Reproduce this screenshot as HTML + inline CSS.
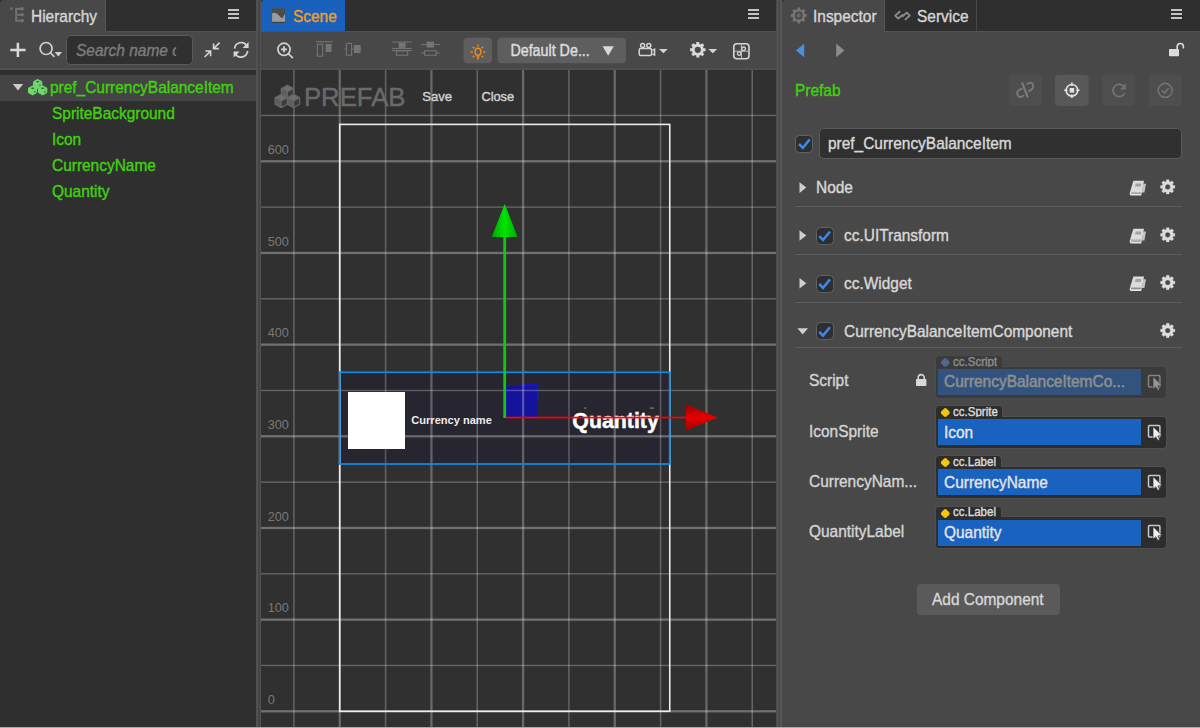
<!DOCTYPE html>
<html lang="en">
<head>
<meta charset="utf-8">
<title>Cocos Creator - Prefab</title>
<style>
*{box-sizing:border-box;margin:0;padding:0}
html,body{width:1200px;height:728px;overflow:hidden;background:#2f2f2f}
body{font-family:"Liberation Sans",sans-serif;font-size:15.45px;color:#cfcfcf;position:relative}
.abs{position:absolute}
.t{position:absolute;white-space:nowrap;font-size:16.2px;line-height:14.93px;transform:scaleX(.954);transform-origin:0 0;-webkit-text-stroke:0.38px currentColor}
svg{position:absolute;overflow:visible}
/* panels */
#hier{left:0;top:0;width:256px;height:727px;background:#2f2f2f}
#split1{left:256px;top:0;width:5.7px;height:727px;background:linear-gradient(90deg,#515151 0,#515151 1.9px,#464646 1.9px,#464646 3.8px,#515151 3.8px)}
#scene{left:261px;top:0;width:516px;height:727px;background:#303030;overflow:hidden}
#split2{left:776.4px;top:0;width:5.6px;height:727px;background:linear-gradient(90deg,#4a4a4a 0,#4a4a4a .6px,#575757 .6px,#575757 1.8px,#4a4a4a 1.8px,#4a4a4a 4.4px,#575757 4.4px,#575757 5.6px)}
#insp{left:782px;top:0;width:418px;height:727px;background:#484848}
#bottomline{left:0;top:726.6px;width:1200px;height:1.4px;background:#acacac}
.tabbar{left:0;top:0;height:31px;background:#2f2f2f}
.toolbar{left:0;top:31px;height:39px;background:#484848;border-top:1.4px solid #525252;border-bottom:2px solid #4f4f4f}
.tab{top:0;height:31px;background:#484848}
.menu i{position:absolute;left:0;width:11px;height:2px;background:#c4c4c4}
.green{color:#41d10f}
.row{left:0;width:256px;height:25.7px}
/* inspector */
.sep{left:13px;width:387px;height:1px;background:#5c5c5c}
.cb{width:18px;height:18px;border-radius:4.5px;background:#2e2e2e;border:1.5px solid #626262}
.pbtn{top:75px;width:33.5px;height:31px;border-radius:4px;background:#4f4f4f}
.fbox{left:154px;width:229.6px;height:31px;border-radius:3.5px;background:#2d2d2d;box-shadow:0 0 0 1px #4f4f4f}
.ftag{left:154px;height:14px;border-radius:3.5px 3.5px 0 0;background:#2d2d2d;box-shadow:0 0 0 1px #4f4f4f}
.fblue{left:156.3px;width:202.3px;height:26px;background:#1a62bf}
.ftagt{font-size:12.1px;line-height:11.4px;color:#dcdcdc;height:10.4px;overflow:hidden}
</style>
</head>
<body>

<!-- ================= HIERARCHY ================= -->
<div id="hier" class="abs">
  <div class="abs tabbar" style="width:256px;border-radius:0 4px 0 0"></div>
  <div class="abs tab" style="left:0;width:106.2px;border-radius:4px 0 0 0;border-right:1px solid #555"></div>
  <div class="t" style="left:31px;top:9.3px;color:#d6d6d6">Hierarchy</div>
  <div class="abs menu" style="left:228px;top:9px;width:11px;height:11px"><i style="top:0"></i><i style="top:4.2px"></i><i style="top:8.4px"></i></div>
  <div class="abs toolbar" style="width:256px"></div>
  <div class="abs" style="left:0;top:31px;width:105.2px;height:1.5px;background:#484848"></div>
  <div class="abs" style="left:66.3px;top:35.2px;width:127.2px;height:30.2px;border-radius:4.5px;background:#303030;border:1.3px solid #5a5a5a"></div>
  <div class="t" style="left:75.8px;top:43px;font-style:italic;color:#7d7d7d;width:105px;overflow:hidden">Search name or uuid</div>
  <div class="abs" style="left:0;top:68px;width:256px;height:2px;background:#515151"></div>
  <div class="abs row" style="top:75px;background:#444"></div>
<svg style="left:0;top:0" width="256" height="210" viewBox="0 0 256 210">
<g fill="#727272"><rect x="10.2" y="7.4" width="2.4" height="2.4"/><rect x="15.2" y="7.8" width="8.2" height="2.2"/><rect x="15.2" y="8" width="1.9" height="13.8"/><rect x="16" y="13.8" width="7.4" height="1.9"/><rect x="16" y="19.7" width="7.4" height="1.9"/><rect x="20.6" y="7.3" width="2.9" height="3"/><rect x="20.6" y="13.2" width="2.9" height="3"/><rect x="20.6" y="19.1" width="2.9" height="3"/></g>
<path d="M17.9,42.8 V57 M10.3,49.9 H25.5" stroke="#dadada" stroke-width="2.5" fill="none"/>
<g fill="none" stroke="#d2d2d2" stroke-width="1.7"><circle cx="46.1" cy="48.5" r="6"/><path d="M50.6,53 L54,56.4" stroke-linecap="round"/></g><path d="M54.6,52 H62 L58.3,56.4 Z" fill="#d2d2d2"/>
<g stroke="#d6d6d6" stroke-width="1.6" fill="none"><path d="M219.6,42.6 L214.2,48 M213.6,43.4 V48.6 H218.8"/><path d="M204.6,57 L210,51.6 M210.6,56.2 V51 H205.4"/></g>
<g stroke="#d6d6d6" stroke-width="1.7" fill="none"><path d="M234.6,48.6 A6.6,6.6 0 0 1 246.6,45.4"/><path d="M247.6,51 A6.6,6.6 0 0 1 235.6,54.2"/></g><path d="M248.6,42 V48 H242.6 Z M233.6,57.6 V51.6 H239.6 Z" fill="#d6d6d6"/>
<path d="M12.8,84 H23.2 L18,90.6 Z" fill="#cccccc"/>
<g><path d="M37.7,79.4 L41.84,81.65 L41.84,86.15 L37.7,88.4 L33.56,86.15 L33.56,81.65 Z" fill="#6dd96c" stroke="#6dd96c" stroke-width="1" stroke-linejoin="round"/><ellipse cx="37.7" cy="81.65" rx="1.62" ry="0.77" fill="#3a5a38"/><ellipse cx="39.98" cy="85.34" rx="0.58" ry="1.08" fill="#3a5a38"/><path d="M32.6,85.9 L36.74,88.15 L36.74,92.65 L32.6,94.9 L28.46,92.65 L28.46,88.15 Z" fill="#6dd96c" stroke="#6dd96c" stroke-width="1" stroke-linejoin="round"/><ellipse cx="32.6" cy="88.15" rx="1.62" ry="0.77" fill="#3a5a38"/><ellipse cx="34.88" cy="91.84" rx="0.58" ry="1.08" fill="#3a5a38"/><path d="M42.7,85.9 L46.84,88.15 L46.84,92.65 L42.7,94.9 L38.56,92.65 L38.56,88.15 Z" fill="#6dd96c" stroke="#6dd96c" stroke-width="1" stroke-linejoin="round"/><ellipse cx="42.7" cy="88.15" rx="1.62" ry="0.77" fill="#3a5a38"/><ellipse cx="44.98" cy="91.84" rx="0.58" ry="1.08" fill="#3a5a38"/></g>
</svg>
  <!-- tree -->
  <div class="t green" style="left:50.3px;top:80px">pref_CurrencyBalanceItem</div>
  <div class="t green" style="left:52px;top:105.7px">SpriteBackground</div>
  <div class="t green" style="left:52px;top:131.6px">Icon</div>
  <div class="t green" style="left:52px;top:157.9px">CurrencyName</div>
  <div class="t green" style="left:52px;top:183.6px">Quantity</div>
</div>

<div id="split1" class="abs"></div>

<!-- ================= SCENE ================= -->
<div id="scene" class="abs">
  <div id="viewport" class="abs" style="left:0;top:70px;width:516px;height:657px;overflow:hidden">
<svg id="scenesvg" style="left:0;top:0" width="516" height="657" viewBox="261 70 516 657" font-family="Liberation Sans, sans-serif">
<rect x="339.75" y="372.3" width="330" height="91.7" fill="#27252f"/>
<rect x="348" y="392" width="57" height="57" fill="#ffffff"/>
<text x="411.3" y="424" font-size="11.8" font-weight="bold" fill="#ececec" textLength="80.5" lengthAdjust="spacingAndGlyphs">Currency name</text>
<text x="572.3" y="427.5" font-size="21.6" font-weight="bold" fill="#ffffff" stroke="#ffffff" stroke-width="0.45" textLength="86.5" lengthAdjust="spacingAndGlyphs">Quantity</text>
<rect x="584" y="407.6" width="2.4" height="0.9" fill="#9a9aa0"/><rect x="649.5" y="407.6" width="4.5" height="0.9" fill="#9a9aa0"/>
<rect x="506" y="386" width="31.3" height="31" fill="#1512a0" fill-opacity="0.96"/>
<path d="M520.8,385 H537.6 V400.8" fill="none" stroke="#1414e6" stroke-width="1.4"/>
<g><rect x="293.17" y="70" width="1.5" height="658" fill="#fff" fill-opacity="0.25"/><rect x="338.60" y="70" width="2.3" height="658" fill="#fff" fill-opacity="0.27"/><rect x="384.83" y="70" width="1.5" height="658" fill="#fff" fill-opacity="0.25"/><rect x="430.27" y="70" width="2.3" height="658" fill="#fff" fill-opacity="0.27"/><rect x="476.50" y="70" width="1.5" height="658" fill="#fff" fill-opacity="0.25"/><rect x="521.93" y="70" width="2.3" height="658" fill="#fff" fill-opacity="0.27"/><rect x="568.17" y="70" width="1.5" height="658" fill="#fff" fill-opacity="0.25"/><rect x="613.60" y="70" width="2.3" height="658" fill="#fff" fill-opacity="0.27"/><rect x="659.83" y="70" width="1.5" height="658" fill="#fff" fill-opacity="0.25"/><rect x="705.27" y="70" width="2.3" height="658" fill="#fff" fill-opacity="0.27"/><rect x="751.50" y="70" width="1.5" height="658" fill="#fff" fill-opacity="0.25"/><rect x="261" y="710.15" width="516" height="2.3" fill="#fff" fill-opacity="0.31"/><rect x="261" y="664.77" width="516" height="1.4" fill="#fff" fill-opacity="0.26"/><rect x="261" y="618.48" width="516" height="2.3" fill="#fff" fill-opacity="0.31"/><rect x="261" y="573.10" width="516" height="1.4" fill="#fff" fill-opacity="0.26"/><rect x="261" y="526.82" width="516" height="2.3" fill="#fff" fill-opacity="0.31"/><rect x="261" y="481.43" width="516" height="1.4" fill="#fff" fill-opacity="0.26"/><rect x="261" y="435.15" width="516" height="2.3" fill="#fff" fill-opacity="0.31"/><rect x="261" y="389.77" width="516" height="1.4" fill="#fff" fill-opacity="0.26"/><rect x="261" y="343.48" width="516" height="2.3" fill="#fff" fill-opacity="0.31"/><rect x="261" y="298.10" width="516" height="1.4" fill="#fff" fill-opacity="0.26"/><rect x="261" y="251.81" width="516" height="2.3" fill="#fff" fill-opacity="0.31"/><rect x="261" y="206.43" width="516" height="1.4" fill="#fff" fill-opacity="0.26"/><rect x="261" y="160.15" width="516" height="2.3" fill="#fff" fill-opacity="0.31"/><rect x="261" y="114.76" width="516" height="1.4" fill="#fff" fill-opacity="0.26"/></g>
<g font-size="12.7" fill="#787878"><text x="267.7" y="703.9">0</text><text x="267.7" y="612.2">100</text><text x="267.7" y="520.6">200</text><text x="267.7" y="428.9">300</text><text x="267.7" y="337.2">400</text><text x="267.7" y="245.6">500</text><text x="267.7" y="153.9">600</text></g>
<rect x="339.75" y="124.4" width="330" height="586.9" fill="none" stroke="#ececec" stroke-width="1.6"/>
<rect x="339.75" y="372.3" width="330" height="91.7" fill="none" stroke="#0d8ce8" stroke-width="1.7"/>
<g><path d="M287.4,85.2 L293.472,88.5 L287.4,91.8 L281.328,88.5 Z" fill="#6e6e6e" stroke="#666" stroke-width="1.2" stroke-linejoin="round"/><path d="M281.328,88.5 L287.4,91.8 L287.4,98.39999999999999 L281.328,95.1 Z" fill="#5e5e5e" stroke="#666" stroke-width="1.2" stroke-linejoin="round"/><path d="M293.472,88.5 L287.4,91.8 L287.4,98.39999999999999 L293.472,95.1 Z" fill="#3c3c3c" stroke="#666" stroke-width="1.2" stroke-linejoin="round"/><path d="M281.2,94.4 L287.272,97.7 L281.2,101 L275.128,97.7 Z" fill="#6e6e6e" stroke="#666" stroke-width="1.2" stroke-linejoin="round"/><path d="M275.128,97.7 L281.2,101 L281.2,107.6 L275.128,104.3 Z" fill="#5e5e5e" stroke="#666" stroke-width="1.2" stroke-linejoin="round"/><path d="M287.272,97.7 L281.2,101 L281.2,107.6 L287.272,104.3 Z" fill="#3c3c3c" stroke="#666" stroke-width="1.2" stroke-linejoin="round"/><path d="M293.6,94.4 L299.672,97.7 L293.6,101 L287.528,97.7 Z" fill="#6e6e6e" stroke="#666" stroke-width="1.2" stroke-linejoin="round"/><path d="M287.528,97.7 L293.6,101 L293.6,107.6 L287.528,104.3 Z" fill="#5e5e5e" stroke="#666" stroke-width="1.2" stroke-linejoin="round"/><path d="M299.672,97.7 L293.6,101 L293.6,107.6 L299.672,104.3 Z" fill="#3c3c3c" stroke="#666" stroke-width="1.2" stroke-linejoin="round"/></g><g fill="#696969" stroke="#696969"><text x="303.9" y="105.7" font-size="26.6" stroke-width="0.5" textLength="101.6" lengthAdjust="spacingAndGlyphs">PREFAB</text></g>
<g fill="#d2d2d2" stroke="#d2d2d2" stroke-width="0.4"><text x="422.2" y="100.6" font-size="13.1">Save</text><text x="481.4" y="100.6" font-size="12.8">Close</text></g>
<defs><linearGradient id="gg" x1="0" x2="1"><stop offset="0" stop-color="#00a800"/><stop offset="0.5" stop-color="#00e400"/><stop offset="1" stop-color="#00a800"/></linearGradient><linearGradient id="rg" x1="0" x2="0" y1="0" y2="1"><stop offset="0" stop-color="#a00000"/><stop offset="0.5" stop-color="#e60000"/><stop offset="1" stop-color="#a00000"/></linearGradient></defs>
<rect x="503.3" y="236" width="2.8" height="182" fill="#10c810"/>
<path d="M504.7,204 L517.6,237 L491.8,237 Z" fill="url(#gg)"/>
<rect x="506" y="416.7" width="181" height="1.7" fill="#ff0000"/>
<path d="M717.8,417.6 L686,404.6 L686,430.6 Z" fill="url(#rg)"/>
</svg>
  </div>
  <div class="abs tabbar" style="width:516px"></div>
  <div class="abs tab" style="left:0;width:84px;background:#1961bd;border-radius:4px 0 0 0"></div>
  <div class="t" style="left:32px;top:9.3px;color:#f0a020">Scene</div>
  <div class="abs menu" style="left:487px;top:9px;width:11px;height:11px"><i style="top:0"></i><i style="top:4.2px"></i><i style="top:8.4px"></i></div>
  <div class="abs toolbar" style="width:516px"></div>
<svg style="left:0;top:0" width="516" height="69" viewBox="261 0 516 69" font-family="Liberation Sans, sans-serif">
<g><rect x="272.1" y="8.2" width="12.9" height="14.5" rx="0.6" fill="#4c4c4c"/><path d="M272.1,22 V13.2 Q274.4,12.4 276.2,13.3 Q278.4,14.6 282.1,18.6 L285,13.8 V22 Z" fill="#9c9c9c"/><rect x="272.1" y="21.8" width="12.9" height="1" fill="#3c3c3c"/></g>
<g fill="none" stroke="#d2d2d2" stroke-width="1.7"><circle cx="284" cy="49.3" r="6.1"/><path d="M288.6,53.9 L292.4,57.7" stroke-linecap="round"/><path d="M281,49.3 H287 M284,46.3 V52.3" stroke-width="1.8"/></g>
<g fill="#747474" stroke="none"><rect x="316" y="41.2" width="16.6" height="1.2"/><rect x="325.6" y="44" width="6" height="8"/><rect x="344.4" y="48.6" width="17" height="1"/><rect x="354" y="45" width="6.6" height="8"/><rect x="392.2" y="41.5" width="19.5" height="1.1"/><rect x="398.6" y="42.6" width="7" height="5.2"/><rect x="392.2" y="47.9" width="19.5" height="1.1"/><rect x="392.2" y="50" width="19.5" height="1.1"/><rect x="421" y="44" width="19.4" height="1"/><rect x="426.6" y="41.6" width="7.4" height="6"/><rect x="421" y="52.6" width="19.4" height="1"/></g>
<g fill="#484848" stroke="#747474" stroke-width="1.1"><rect x="317.4" y="44.4" width="5.2" height="11.8"/><rect x="346.4" y="43.4" width="5.2" height="11.8"/><rect x="396.5" y="51" width="11.2" height="4.2"/><rect x="424.6" y="50.8" width="11.6" height="4.4"/></g>
<rect x="463.5" y="37.7" width="28.6" height="25.6" rx="4" fill="#5e5e5e"/>
<g stroke="#f08c1c" fill="none" stroke-width="1.4"><ellipse cx="478.0" cy="51.7" rx="2.9" ry="3.5"/><path d="M478.0,46.8 L478.0,44.6 M481.7,48.3 L483.2,46.8 M483.2,52.0 L485.4,52.0 M481.7,55.7 L483.2,57.2 M474.3,55.7 L472.8,57.2 M472.8,52.0 L470.6,52.0 M474.3,48.3 L472.8,46.8"/><path d="M476.5,57.0 H479.5 M478.0,57.8 V59.6" stroke-width="1.5"/></g>
<rect x="497.4" y="37.7" width="128.6" height="25.6" rx="4" fill="#5e5e5e"/>
<text x="510.4" y="55.8" font-size="16.2" fill="#dcdcdc" stroke="#dcdcdc" stroke-width="0.45" textLength="79.4" lengthAdjust="spacingAndGlyphs">Default De...</text>
<path d="M602.6,46.2 H613.8 L608.2,55.8 Z" fill="#d8d8d8"/>
<g fill="none" stroke="#d4d4d4" stroke-width="1.5"><rect x="639.2" y="48.4" width="12.4" height="7.2" rx="1.6"/><circle cx="642.6" cy="45.6" r="2"/><circle cx="648.8" cy="45.6" r="2"/><path d="M652.4,50.4 L654.6,49.2 V55 L652.4,53.8"/></g>
<path d="M659,49 H667.8 L663.4,53.2 Z" fill="#d4d4d4"/>
<path transform="translate(697.8 49.8)" d="M-1.57,-5.79 L-1.47,-7.76 L1.47,-7.76 L1.57,-5.79 L2.99,-5.20 L4.45,-6.53 L6.53,-4.45 L5.20,-2.99 L5.79,-1.57 L7.76,-1.47 L7.76,1.47 L5.79,1.57 L5.20,2.99 L6.53,4.45 L4.45,6.53 L2.99,5.20 L1.57,5.79 L1.47,7.76 L-1.47,7.76 L-1.57,5.79 L-2.99,5.20 L-4.45,6.53 L-6.53,4.45 L-5.20,2.99 L-5.79,1.57 L-7.76,1.47 L-7.76,-1.47 L-5.79,-1.57 L-5.20,-2.99 L-6.53,-4.45 L-4.45,-6.53 L-2.99,-5.20Z M3.10,0.00 A3.1,3.1 0 1,0 -3.10,0.00 A3.1,3.1 0 1,0 3.10,0.00Z" fill="#d8d8d8" fill-rule="evenodd"/>
<path d="M708.4,49 H717.2 L712.8,53.2 Z" fill="#d4d4d4"/>
<g fill="none" stroke="#d6d6d6" stroke-width="1.6"><rect x="733.8" y="43.8" width="15.2" height="15" rx="3"/></g><g fill="none" stroke="#bdbdbd" stroke-width="1"><path d="M741.4,44 V58.6 M734,51.2 H748.8"/><circle cx="739.2" cy="53.6" r="1.8" stroke="#d6d6d6" stroke-width="1.3"/><circle cx="743.6" cy="48.8" r="1.8" stroke="#d6d6d6" stroke-width="1.3"/></g>
</svg>
</div>

<div id="split2" class="abs"></div>

<!-- ================= INSPECTOR ================= -->
<div id="insp" class="abs">
  <div class="abs tabbar" style="width:418px"></div>
  <div class="abs tab" style="left:0;width:102.6px;border-radius:4px 0 0 0;border-right:1px solid #555"></div>
  <div class="t" style="left:31px;top:9.3px;color:#d6d6d6">Inspector</div>
  <div class="t" style="left:135px;top:9.3px;color:#d6d6d6">Service</div>
  <div class="abs menu" style="left:389px;top:9px;width:11px;height:11px"><i style="top:0"></i><i style="top:4.2px"></i><i style="top:8.4px"></i></div>
  <div class="abs" style="left:102.4px;top:0;width:92.6px;height:31px;border-right:1px solid #484848"></div>
  <div class="abs" style="left:102.4px;top:31px;width:315.6px;height:1px;background:#525252"></div>
  <svg style="left:0;top:0" width="418" height="727" viewBox="782 0 418 727" font-family="Liberation Sans, sans-serif">
<path transform="translate(798.8 15.5)" d="M6.14,-1.41 L7.90,-1.25 L7.90,1.25 L6.14,1.41 L5.34,3.34 L6.47,4.70 L4.70,6.47 L3.34,5.34 L1.41,6.14 L1.25,7.90 L-1.25,7.90 L-1.41,6.14 L-3.34,5.34 L-4.70,6.47 L-6.47,4.70 L-5.34,3.34 L-6.14,1.41 L-7.90,1.25 L-7.90,-1.25 L-6.14,-1.41 L-5.34,-3.34 L-6.47,-4.70 L-4.70,-6.47 L-3.34,-5.34 L-1.41,-6.14 L-1.25,-7.90 L1.25,-7.90 L1.41,-6.14 L3.34,-5.34 L4.70,-6.47 L6.47,-4.70 L5.34,-3.34Z M3.90,0.00 A3.9,3.9 0 1,0 -3.90,0.00 A3.9,3.9 0 1,0 3.90,0.00Z" fill="#767676" fill-rule="evenodd"/><circle cx="798.8" cy="15.5" r="2.2" fill="#686868"/>
<g fill="none" stroke="#8c8c8c" stroke-width="1.9" stroke-linejoin="round" stroke-linecap="round"><path d="M899.6,11.8 L895.2,15.6 L898.2,18.6 L902.4,15"/><path d="M905.4,19.4 L909.8,15.6 L906.8,12.6 L902.6,16.2"/></g>
<path d="M796,50.4 L804.2,43.6 V57.2 Z" fill="#4a90e2"/><path d="M844.4,50.4 L836.2,43.6 V57.2 Z" fill="#8c8c8c"/>
<g><rect x="1169" y="49" width="10" height="7.2" rx="0.8" fill="#dcdcdc"/><path d="M1177.2,49 V46.6 A3.1,3.1 0 0 1 1183.4,46.6 V48.6" fill="none" stroke="#dcdcdc" stroke-width="1.6"/></g>
<rect x="1008.4" y="74.8" width="33.6" height="31.2" rx="4" fill="#4e4e4e"/>
<rect x="1055.1" y="74.8" width="33.6" height="31.2" rx="4" fill="#585858"/>
<rect x="1101.8" y="74.8" width="33.6" height="31.2" rx="4" fill="#4e4e4e"/>
<rect x="1148.5" y="74.8" width="33.6" height="31.2" rx="4" fill="#4e4e4e"/>
<g fill="none" stroke="#7a7a7a" stroke-linecap="round"><path d="M1022.4,83.4 L1027.5,96.6" stroke-width="2.3"/><path d="M1021.4,88.8 C1018.6,89.8 1016.8,92 1017.4,94.4 C1018.2,97.4 1021.2,97.8 1023.4,95.6" stroke-width="1.9"/><path d="M1027.6,83.8 C1029.2,82 1032.2,82.2 1033.1,84.8 C1033.9,87.6 1031.6,90 1029,91" stroke-width="1.9"/></g>
<g fill="none" stroke="#e2e2e2" stroke-width="1.6"><circle cx="1071.9" cy="90.3" r="5.8"/><path d="M1071.9,82.6 V86 M1071.9,94.6 V98 M1064.2,90.3 H1067.6 M1076.2,90.3 H1079.6"/></g><rect x="1069.6" y="88" width="4.6" height="4.6" fill="#e2e2e2"/>
<g fill="none" stroke="#727272" stroke-width="1.8"><path d="M1124.4,87 A6.2,6.2 0 1 0 1124.8,93.2"/></g><path d="M1125.8,83.4 V89.4 H1119.8 Z" fill="#727272"/>
<g fill="none" stroke="#727272" stroke-width="1.6"><circle cx="1165.2" cy="90.4" r="7"/><path d="M1161.8,90.4 L1164.4,93 L1168.8,88" stroke-width="1.8"/></g>
<path d="M799.5,182.3 L806.3,187.6 L799.5,192.9 Z" fill="#cfcfcf"/>
<path d="M799.5,230.2 L806.3,235.5 L799.5,240.8 Z" fill="#cfcfcf"/>
<path d="M799.5,277.9 L806.3,283.2 L799.5,288.5 Z" fill="#cfcfcf"/>
<path d="M797.4,328.2 H808 L802.7,334.6 Z" fill="#cfcfcf"/>
<g transform="translate(1137.8 188.1)"><path d="M5.6,-4.4 L8.2,-4.4 L6.6,4.4 L4,4.4 Z" fill="#c4c4c4"/><path d="M-4.4,-7.3 H6.2 L4.2,3.8 H-7.8 Z" fill="#dcdcdc"/><path d="M-2.2,-4.6 H3.6 L3.1,-1.6 H-2.8 Z" fill="#a2a2a2"/><path d="M-7.8,3.8 Q-8.8,5.8 -7.2,7.4 H3.4 L4.2,3.8 Z" fill="#e6e6e6"/><path d="M-6.8,5 H3.4" stroke="#5a5a5a" stroke-width="0.8" fill="none"/></g>
<g transform="translate(1137.8 236.0)"><path d="M5.6,-4.4 L8.2,-4.4 L6.6,4.4 L4,4.4 Z" fill="#c4c4c4"/><path d="M-4.4,-7.3 H6.2 L4.2,3.8 H-7.8 Z" fill="#dcdcdc"/><path d="M-2.2,-4.6 H3.6 L3.1,-1.6 H-2.8 Z" fill="#a2a2a2"/><path d="M-7.8,3.8 Q-8.8,5.8 -7.2,7.4 H3.4 L4.2,3.8 Z" fill="#e6e6e6"/><path d="M-6.8,5 H3.4" stroke="#5a5a5a" stroke-width="0.8" fill="none"/></g>
<g transform="translate(1137.8 283.7)"><path d="M5.6,-4.4 L8.2,-4.4 L6.6,4.4 L4,4.4 Z" fill="#c4c4c4"/><path d="M-4.4,-7.3 H6.2 L4.2,3.8 H-7.8 Z" fill="#dcdcdc"/><path d="M-2.2,-4.6 H3.6 L3.1,-1.6 H-2.8 Z" fill="#a2a2a2"/><path d="M-7.8,3.8 Q-8.8,5.8 -7.2,7.4 H3.4 L4.2,3.8 Z" fill="#e6e6e6"/><path d="M-6.8,5 H3.4" stroke="#5a5a5a" stroke-width="0.8" fill="none"/></g>
<path transform="translate(1167.7 186.9)" d="M-1.46,-5.41 L-1.36,-7.17 L1.36,-7.17 L1.46,-5.41 L2.79,-4.86 L4.11,-6.03 L6.03,-4.11 L4.86,-2.79 L5.41,-1.46 L7.17,-1.36 L7.17,1.36 L5.41,1.46 L4.86,2.79 L6.03,4.11 L4.11,6.03 L2.79,4.86 L1.46,5.41 L1.36,7.17 L-1.36,7.17 L-1.46,5.41 L-2.79,4.86 L-4.11,6.03 L-6.03,4.11 L-4.86,2.79 L-5.41,1.46 L-7.17,1.36 L-7.17,-1.36 L-5.41,-1.46 L-4.86,-2.79 L-6.03,-4.11 L-4.11,-6.03 L-2.79,-4.86Z M2.60,0.00 A2.6,2.6 0 1,0 -2.60,0.00 A2.6,2.6 0 1,0 2.60,0.00Z" fill="#dcdcdc" fill-rule="evenodd" stroke="#dcdcdc" stroke-width="0.3" stroke-linejoin="round"/>
<path transform="translate(1167.7 234.8)" d="M-1.46,-5.41 L-1.36,-7.17 L1.36,-7.17 L1.46,-5.41 L2.79,-4.86 L4.11,-6.03 L6.03,-4.11 L4.86,-2.79 L5.41,-1.46 L7.17,-1.36 L7.17,1.36 L5.41,1.46 L4.86,2.79 L6.03,4.11 L4.11,6.03 L2.79,4.86 L1.46,5.41 L1.36,7.17 L-1.36,7.17 L-1.46,5.41 L-2.79,4.86 L-4.11,6.03 L-6.03,4.11 L-4.86,2.79 L-5.41,1.46 L-7.17,1.36 L-7.17,-1.36 L-5.41,-1.46 L-4.86,-2.79 L-6.03,-4.11 L-4.11,-6.03 L-2.79,-4.86Z M2.60,0.00 A2.6,2.6 0 1,0 -2.60,0.00 A2.6,2.6 0 1,0 2.60,0.00Z" fill="#dcdcdc" fill-rule="evenodd" stroke="#dcdcdc" stroke-width="0.3" stroke-linejoin="round"/>
<path transform="translate(1167.7 282.5)" d="M-1.46,-5.41 L-1.36,-7.17 L1.36,-7.17 L1.46,-5.41 L2.79,-4.86 L4.11,-6.03 L6.03,-4.11 L4.86,-2.79 L5.41,-1.46 L7.17,-1.36 L7.17,1.36 L5.41,1.46 L4.86,2.79 L6.03,4.11 L4.11,6.03 L2.79,4.86 L1.46,5.41 L1.36,7.17 L-1.36,7.17 L-1.46,5.41 L-2.79,4.86 L-4.11,6.03 L-6.03,4.11 L-4.86,2.79 L-5.41,1.46 L-7.17,1.36 L-7.17,-1.36 L-5.41,-1.46 L-4.86,-2.79 L-6.03,-4.11 L-4.11,-6.03 L-2.79,-4.86Z M2.60,0.00 A2.6,2.6 0 1,0 -2.60,0.00 A2.6,2.6 0 1,0 2.60,0.00Z" fill="#dcdcdc" fill-rule="evenodd" stroke="#dcdcdc" stroke-width="0.3" stroke-linejoin="round"/>
<path transform="translate(1167.7 330.5)" d="M-1.46,-5.41 L-1.36,-7.17 L1.36,-7.17 L1.46,-5.41 L2.79,-4.86 L4.11,-6.03 L6.03,-4.11 L4.86,-2.79 L5.41,-1.46 L7.17,-1.36 L7.17,1.36 L5.41,1.46 L4.86,2.79 L6.03,4.11 L4.11,6.03 L2.79,4.86 L1.46,5.41 L1.36,7.17 L-1.36,7.17 L-1.46,5.41 L-2.79,4.86 L-4.11,6.03 L-6.03,4.11 L-4.86,2.79 L-5.41,1.46 L-7.17,1.36 L-7.17,-1.36 L-5.41,-1.46 L-4.86,-2.79 L-6.03,-4.11 L-4.11,-6.03 L-2.79,-4.86Z M2.60,0.00 A2.6,2.6 0 1,0 -2.60,0.00 A2.6,2.6 0 1,0 2.60,0.00Z" fill="#dcdcdc" fill-rule="evenodd" stroke="#dcdcdc" stroke-width="0.3" stroke-linejoin="round"/>
<g><rect x="916" y="379" width="10.4" height="7" rx="0.8" fill="#d8d8d8"/><path d="M918.2,379 V377.6 A3,3 0 0 1 924.2,377.6 V379" fill="none" stroke="#d8d8d8" stroke-width="1.6"/></g>
</svg>
  <div class="t green" style="left:12.6px;top:83.4px">Prefab</div>
  <div class="abs cb" style="left:13.4px;top:134.6px"></div>
  <div class="abs" style="left:36.8px;top:128.2px;width:362.8px;height:30.6px;border-radius:4.5px;background:#303030;border:1.3px solid #5a5a5a"></div>
  <div class="t" style="left:46.0px;top:135.6px;color:#d8d8d8">pref_CurrencyBalanceItem</div>
  <div class="t" style="left:33.7px;top:179.7px;color:#d8d8d8">Node</div>
  <div class="abs sep" style="top:206px"></div>
  <div class="abs cb" style="left:33.6px;top:226.8px"></div>
  <div class="t" style="left:62.2px;top:228.1px;color:#d8d8d8">cc.UITransform</div>
  <div class="abs sep" style="top:254px"></div>
  <div class="abs cb" style="left:33.6px;top:274.6px"></div>
  <div class="t" style="left:62.2px;top:275.9px;color:#d8d8d8">cc.Widget</div>
  <div class="abs sep" style="top:302px"></div>
  <div class="abs cb" style="left:33.6px;top:322.4px"></div>
  <div class="t" style="left:62.2px;top:323.5px;color:#d8d8d8">CurrencyBalanceItemComponent</div>
  <div class="abs sep" style="top:347px"></div>
  <div class="t" style="left:27.2px;top:373.4px;color:#d4d4d4">Script</div>
  <div class="abs" style="left:0;top:0;width:418px;height:727px;opacity:.46"><div class="abs ftag" style="top:356.0px;width:65.8px"></div><div class="abs fbox" style="top:366.6px"></div><div class="abs" style="left:154px;top:364.6px;width:65.8px;height:5px;background:#2d2d2d"></div><div class="t ftagt" style="left:171.2px;top:356.7px">cc.Script</div><div class="abs" style="left:159.2px;top:358.1px;width:8.6px;height:8.6px;background:#5b8ee0;border-radius:2.4px;transform:rotate(45deg) scale(.82)"></div><div class="abs fblue" style="top:369.0px"></div><div class="t" style="left:162.4px;top:374.3px;color:#e4e4e4">CurrencyBalanceItemCo...</div><svg style="left:365.4px;top:373.6px" width="17" height="18" viewBox="0 0 17 18"><rect x="1.5" y="1.5" width="11.4" height="11.4" rx="1" fill="none" stroke="#c9c9c9" stroke-width="1.5"/><path d="M6,2.6 V15.2 L8.9,12.7 L10.7,16.4 L12.7,15.5 L10.9,11.9 L15.2,11.5 Z" fill="#f0f0f0" stroke="#2b2b2b" stroke-width="0.7" stroke-linejoin="round"/></svg></div>
  <div class="t" style="left:27.2px;top:423.6px;color:#d4d4d4">IconSprite</div>
  <div class="abs" style="left:0;top:0;width:418px;height:727px"><div class="abs ftag" style="top:406.2px;width:66.2px"></div><div class="abs fbox" style="top:416.8px"></div><div class="abs" style="left:154px;top:414.8px;width:66.2px;height:5px;background:#2d2d2d"></div><div class="t ftagt" style="left:171.2px;top:406.9px">cc.Sprite</div><div class="abs" style="left:159.2px;top:408.3px;width:8.6px;height:8.6px;background:#f5c70a;border-radius:2.4px;transform:rotate(45deg) scale(.82)"></div><div class="abs fblue" style="top:419.2px"></div><div class="t" style="left:162.4px;top:424.5px;color:#e4e4e4">Icon</div><svg style="left:365.4px;top:423.8px" width="17" height="18" viewBox="0 0 17 18"><rect x="1.5" y="1.5" width="11.4" height="11.4" rx="1" fill="none" stroke="#c9c9c9" stroke-width="1.5"/><path d="M6,2.6 V15.2 L8.9,12.7 L10.7,16.4 L12.7,15.5 L10.9,11.9 L15.2,11.5 Z" fill="#f0f0f0" stroke="#2b2b2b" stroke-width="0.7" stroke-linejoin="round"/></svg></div>
  <div class="t" style="left:27.2px;top:473.7px;color:#d4d4d4">CurrencyNam...</div>
  <div class="abs" style="left:0;top:0;width:418px;height:727px"><div class="abs ftag" style="top:456.3px;width:64.6px"></div><div class="abs fbox" style="top:466.9px"></div><div class="abs" style="left:154px;top:464.9px;width:64.6px;height:5px;background:#2d2d2d"></div><div class="t ftagt" style="left:171.2px;top:457.0px">cc.Label</div><div class="abs" style="left:159.2px;top:458.4px;width:8.6px;height:8.6px;background:#f5c70a;border-radius:2.4px;transform:rotate(45deg) scale(.82)"></div><div class="abs fblue" style="top:469.3px"></div><div class="t" style="left:162.4px;top:474.6px;color:#e4e4e4">CurrencyName</div><svg style="left:365.4px;top:473.9px" width="17" height="18" viewBox="0 0 17 18"><rect x="1.5" y="1.5" width="11.4" height="11.4" rx="1" fill="none" stroke="#c9c9c9" stroke-width="1.5"/><path d="M6,2.6 V15.2 L8.9,12.7 L10.7,16.4 L12.7,15.5 L10.9,11.9 L15.2,11.5 Z" fill="#f0f0f0" stroke="#2b2b2b" stroke-width="0.7" stroke-linejoin="round"/></svg></div>
  <div class="t" style="left:27.2px;top:524.0px;color:#d4d4d4">QuantityLabel</div>
  <div class="abs" style="left:0;top:0;width:418px;height:727px"><div class="abs ftag" style="top:506.6px;width:64.6px"></div><div class="abs fbox" style="top:517.2px"></div><div class="abs" style="left:154px;top:515.2px;width:64.6px;height:5px;background:#2d2d2d"></div><div class="t ftagt" style="left:171.2px;top:507.3px">cc.Label</div><div class="abs" style="left:159.2px;top:508.7px;width:8.6px;height:8.6px;background:#f5c70a;border-radius:2.4px;transform:rotate(45deg) scale(.82)"></div><div class="abs fblue" style="top:519.6px"></div><div class="t" style="left:162.4px;top:524.9px;color:#e4e4e4">Quantity</div><svg style="left:365.4px;top:524.2px" width="17" height="18" viewBox="0 0 17 18"><rect x="1.5" y="1.5" width="11.4" height="11.4" rx="1" fill="none" stroke="#c9c9c9" stroke-width="1.5"/><path d="M6,2.6 V15.2 L8.9,12.7 L10.7,16.4 L12.7,15.5 L10.9,11.9 L15.2,11.5 Z" fill="#f0f0f0" stroke="#2b2b2b" stroke-width="0.7" stroke-linejoin="round"/></svg></div>
  <svg style="left:0;top:0" width="418" height="400" viewBox="782 0 418 400"><path d="M799.0,144.0 L802.8,147.8 L809.8,139.4" fill="none" stroke="#3e86ea" stroke-width="2.5"/><path d="M819.2,236.2 L823.0,240.0 L830.0,231.6" fill="none" stroke="#3e86ea" stroke-width="2.5"/><path d="M819.2,284.0 L823.0,287.8 L830.0,279.4" fill="none" stroke="#3e86ea" stroke-width="2.5"/><path d="M819.2,331.8 L823.0,335.6 L830.0,327.2" fill="none" stroke="#3e86ea" stroke-width="2.5"/></svg>
  <div class="abs" style="left:134.6px;top:584px;width:143.6px;height:31px;border-radius:4px;background:#5a5a5a"></div>
  <div class="t" style="left:150.3px;top:591.8px;color:#d6d6d6">Add Component</div>
</div>

<div id="bottomline" class="abs"></div>
</body>
</html>
